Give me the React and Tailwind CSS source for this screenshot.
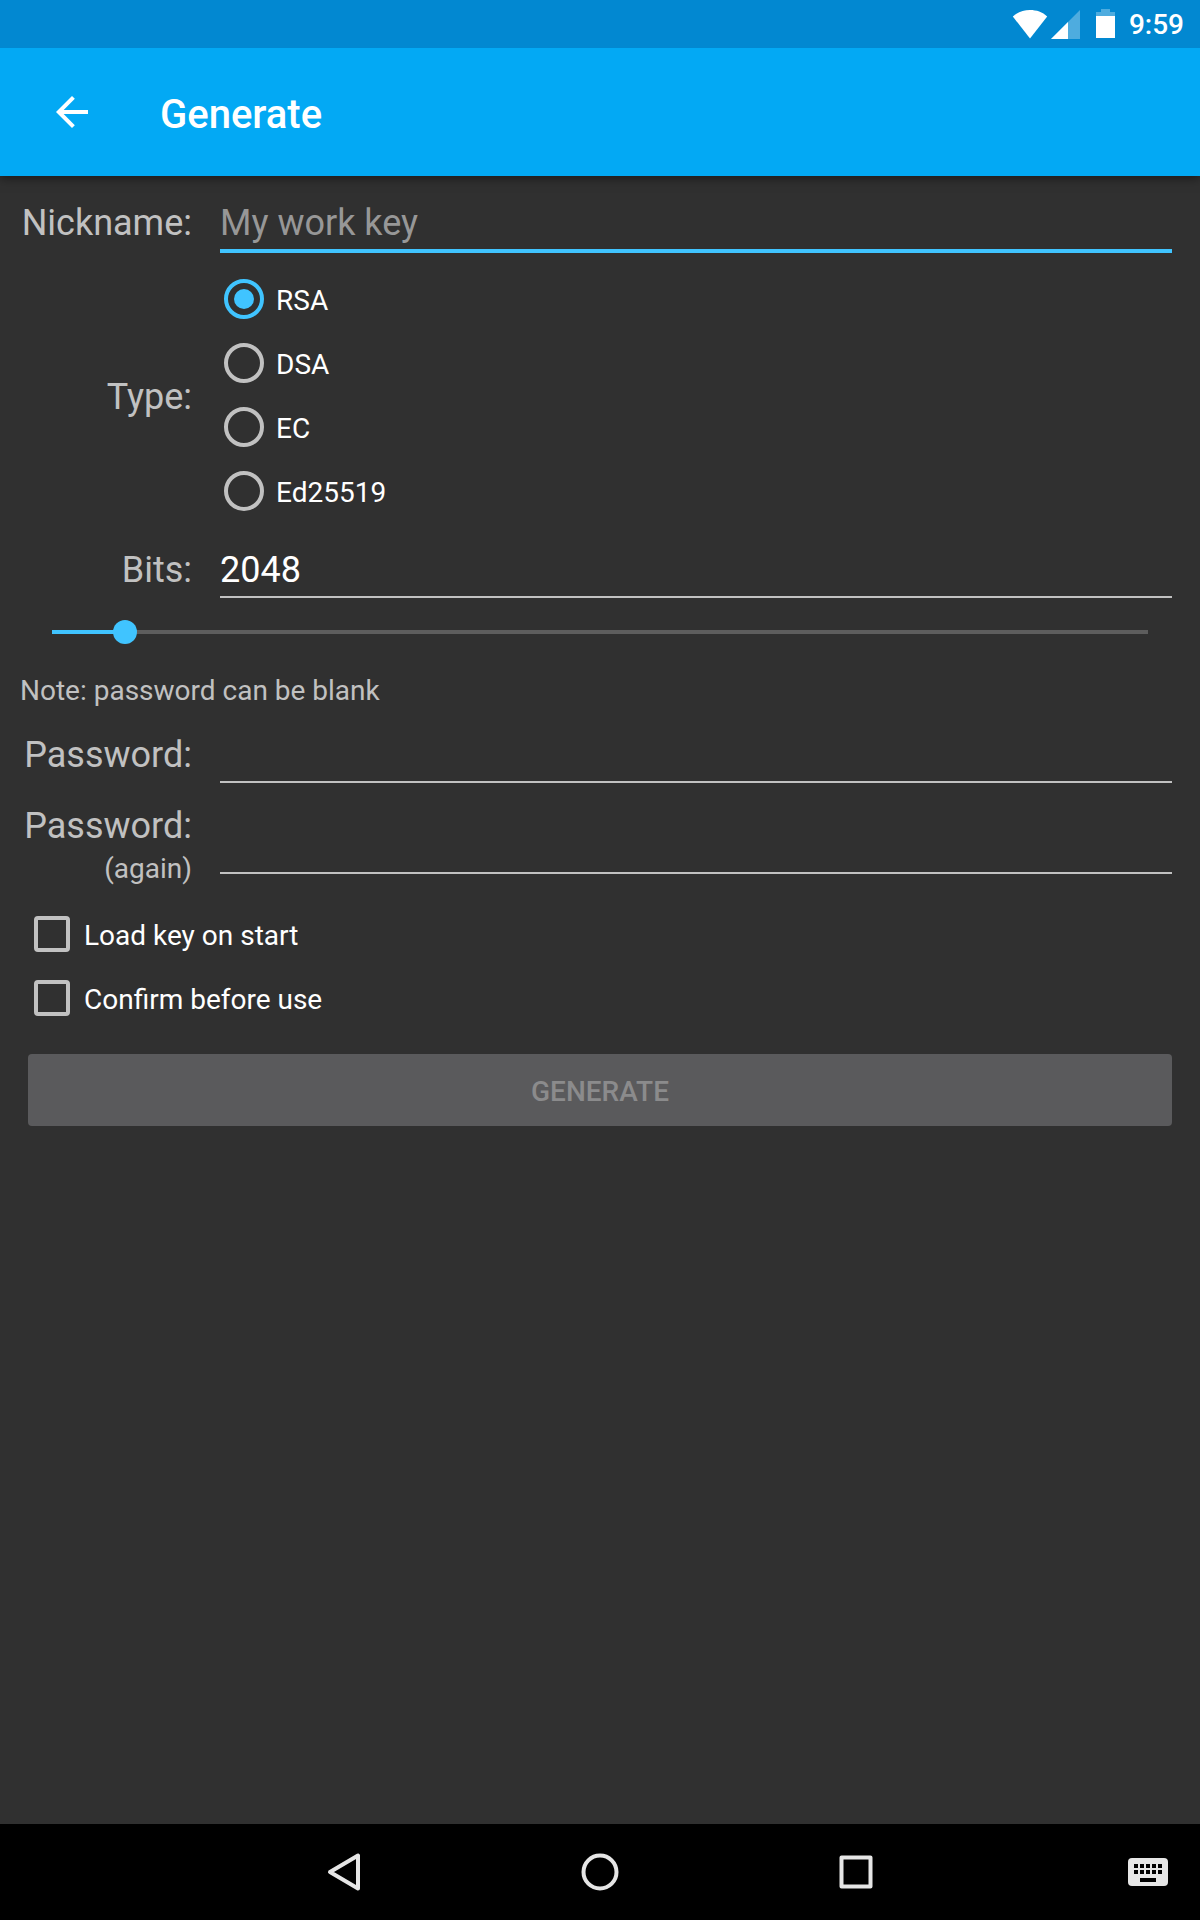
import { useState } from "react";

const KEY_TYPES = ["RSA", "DSA", "EC", "Ed25519"];
const MIN_BITS = 1024;
const MAX_BITS = 16384;

const labelClass = "w-43 shrink-0 text-right text-4xl leading-[42px] text-[#c1c1c1]";
const fieldClass =
  "min-w-0 flex-1 appearance-none rounded-none border-b-2 border-[#c1c1c1] bg-transparent pb-[5px] text-4xl leading-[42px] text-white outline-none placeholder:text-[#979797]";

function StatusBar() {
  return (
    <div className="z-20 flex h-12 items-center justify-end bg-[#0288d1] pr-4 text-white">
      <svg className="h-12 w-9" viewBox="0 0 36 48" fill="currentColor" aria-label="Wi-Fi">
        <path d="M18 38.500 0.800 16.500C5.500 12 11.500 10 18 10s12.500 2 17.200 6.500z" />
      </svg>
      <svg className="ml-0.5 h-12 w-8" viewBox="0 0 32 48" fill="currentColor" aria-label="Mobile signal">
        <path d="M1 39 30 10V39z" fillOpacity=".3" />
        <path d="M1 39 18 22V39z" />
      </svg>
      <svg className="ml-3.5 h-12 w-5" viewBox="0 0 20 48" fill="currentColor" aria-label="Battery">
        <path d="M5 9h9v3h5v4H0v-4h5z" fillOpacity=".3" />
        <path d="M0 16h19v22H0z" />
      </svg>
      <span className="ml-[13px] pt-0.5 text-[28px] leading-8 font-medium">9:59</span>
    </div>
  );
}

function AppBar() {
  return (
    <header className="z-10 flex h-32 items-center bg-[#03a9f4] pl-12 text-white shadow-[0_2px_10px_rgba(0,0,0,0.5)]">
      <button type="button" aria-label="Back" className="size-12">
        <svg viewBox="0 0 24 24" className="size-12" fill="currentColor">
          <path d="M20 11H7.830l5.590-5.590L12 4l-8 8 8 8 1.410-1.410L7.830 13H20v-2z" />
        </svg>
      </button>
      <h1 className="ml-16 pt-1.5 text-[40px] leading-12 font-medium">Generate</h1>
    </header>
  );
}

function CheckRow({ label }) {
  return (
    <label className="flex h-16 items-center gap-3.5 pl-[34px]">
      <input
        type="checkbox"
        className="size-9 appearance-none rounded border-4 border-[#c1c1c1] checked:border-[#40c4ff] checked:bg-[#40c4ff]"
      />
      <span className="pt-1 text-[28px] leading-8 text-white">{label}</span>
    </label>
  );
}

function NavBar() {
  return (
    <nav className="grid h-24 grid-cols-[1fr_auto_1fr] items-center bg-black text-[#e6e6e6]">
      <span />
      <div className="flex">
        <button type="button" aria-label="Back" className="flex w-64 justify-center">
          <svg viewBox="0 0 40 40" className="size-10" fill="none" stroke="currentColor" strokeWidth="4" strokeLinejoin="round">
            <path d="M34 3.500V36.500L6 20z" />
          </svg>
        </button>
        <button type="button" aria-label="Home" className="flex w-64 justify-center">
          <svg viewBox="0 0 40 40" className="size-10" fill="none" stroke="currentColor" strokeWidth="4">
            <circle cx="20" cy="20" r="16.500" />
          </svg>
        </button>
        <button type="button" aria-label="Recent apps" className="flex w-64 justify-center">
          <svg viewBox="0 0 40 40" className="size-10" fill="none" stroke="currentColor" strokeWidth="4" strokeLinejoin="round">
            <rect x="5.500" y="5.500" width="29" height="29" />
          </svg>
        </button>
      </div>
      <button type="button" aria-label="Switch keyboard" className="mr-8 justify-self-end">
        <svg viewBox="0 0 40 28" className="h-7 w-10">
          <rect width="40" height="28" rx="4" fill="currentColor" />
          {[6, 12, 18, 24, 30].map((x) => (
            <g key={x} fill="#000">
              <rect x={x} y="6" width="4" height="4" />
              <rect x={x} y="12" width="4" height="4" />
            </g>
          ))}
          <rect x="12" y="20" width="16" height="4" fill="#000" />
        </svg>
      </button>
    </nav>
  );
}

export default function App() {
  const [type, setType] = useState("RSA");
  const [bits, setBits] = useState(2048);
  const filled = (Math.max(0, bits - MIN_BITS) / (MAX_BITS - MIN_BITS)) * 100;

  return (
    <div className="flex min-h-screen flex-col bg-[#303030] font-[Roboto,sans-serif]">
      <StatusBar />
      <AppBar />
      <form className="flex flex-1 flex-col pt-[26px]" onSubmit={(e) => e.preventDefault()}>
        <div className="flex items-start gap-7 pr-7 pl-5">
          <label htmlFor="nickname" className={labelClass}>Nickname:</label>
          <input
            id="nickname"
            type="text"
            placeholder="My work key"
            className="min-w-0 flex-1 appearance-none rounded-none border-b-4 border-[#40c4ff] bg-transparent pb-[5px] text-4xl leading-[42px] text-white outline-none placeholder:text-[#979797]"
          />
        </div>

        <div role="radiogroup" aria-labelledby="type-label" className="mt-3.5 flex items-center gap-7 pr-7 pl-5">
          <span id="type-label" className={`${labelClass} pt-1`}>Type:</span>
          <div className="flex flex-1 flex-col pl-1">
            {KEY_TYPES.map((name) => (
              <label key={name} className="flex h-16 items-center gap-3">
                <input
                  type="radio"
                  name="type"
                  checked={type === name}
                  onChange={() => setType(name)}
                  className="grid size-10 appearance-none place-items-center rounded-full border-4 border-[#c1c1c1] checked:border-[#40c4ff] checked:before:size-5 checked:before:rounded-full checked:before:bg-[#40c4ff] checked:before:content-['']"
                />
                <span className="pt-1 text-[28px] leading-8 text-white">{name}</span>
              </label>
            ))}
          </div>
        </div>

        <div className="mt-[26px] flex items-start gap-7 pr-7 pl-5">
          <label htmlFor="bits" className={labelClass}>Bits:</label>
          <input
            id="bits"
            type="text"
            inputMode="numeric"
            value={bits}
            onChange={(e) => setBits(Number(e.target.value) || 0)}
            className={fieldClass}
          />
        </div>

        <input
          type="range"
          aria-label="Bits"
          min={MIN_BITS}
          max={MAX_BITS}
          step="8"
          value={bits}
          onChange={(e) => setBits(Number(e.target.value))}
          className="mx-10 mt-[22px] h-6 appearance-none bg-[length:calc(100%-24px)_4px] bg-center bg-no-repeat outline-none [&::-webkit-slider-thumb]:size-6 [&::-webkit-slider-thumb]:appearance-none [&::-webkit-slider-thumb]:rounded-full [&::-webkit-slider-thumb]:bg-[#40c4ff]"
          style={{ backgroundImage: `linear-gradient(to right, #40c4ff ${filled}%, #5d5d5d ${filled}%)` }}
        />

        <p className="mt-[30px] px-5 text-[28px] leading-[33px] text-[#c1c1c1]">Note: password can be blank</p>

        <div className="mt-[27px] flex items-start gap-7 pr-7 pl-5">
          <label htmlFor="password" className={labelClass}>Password:</label>
          <input id="password" type="password" className={fieldClass} />
        </div>

        <div className="mt-[22px] flex items-start gap-7 pr-7 pl-5">
          <label htmlFor="password-again" className={labelClass}>
            Password:
            <span className="block pt-[5px] text-[28px] leading-[33px]">(again)</span>
          </label>
          <div className="flex flex-1 pt-5">
            <input id="password-again" type="password" className={fieldClass} />
          </div>
        </div>

        <div className="mt-[17px]">
          <CheckRow label="Load key on start" />
          <CheckRow label="Confirm before use" />
        </div>

        <button
          type="submit"
          disabled
          className="mx-7 mt-6 h-18 rounded bg-[#5a5a5c] pt-1 text-[28px] leading-8 font-medium text-[#8b8b8c]"
        >
          GENERATE
        </button>
      </form>
      <NavBar />
    </div>
  );
}
